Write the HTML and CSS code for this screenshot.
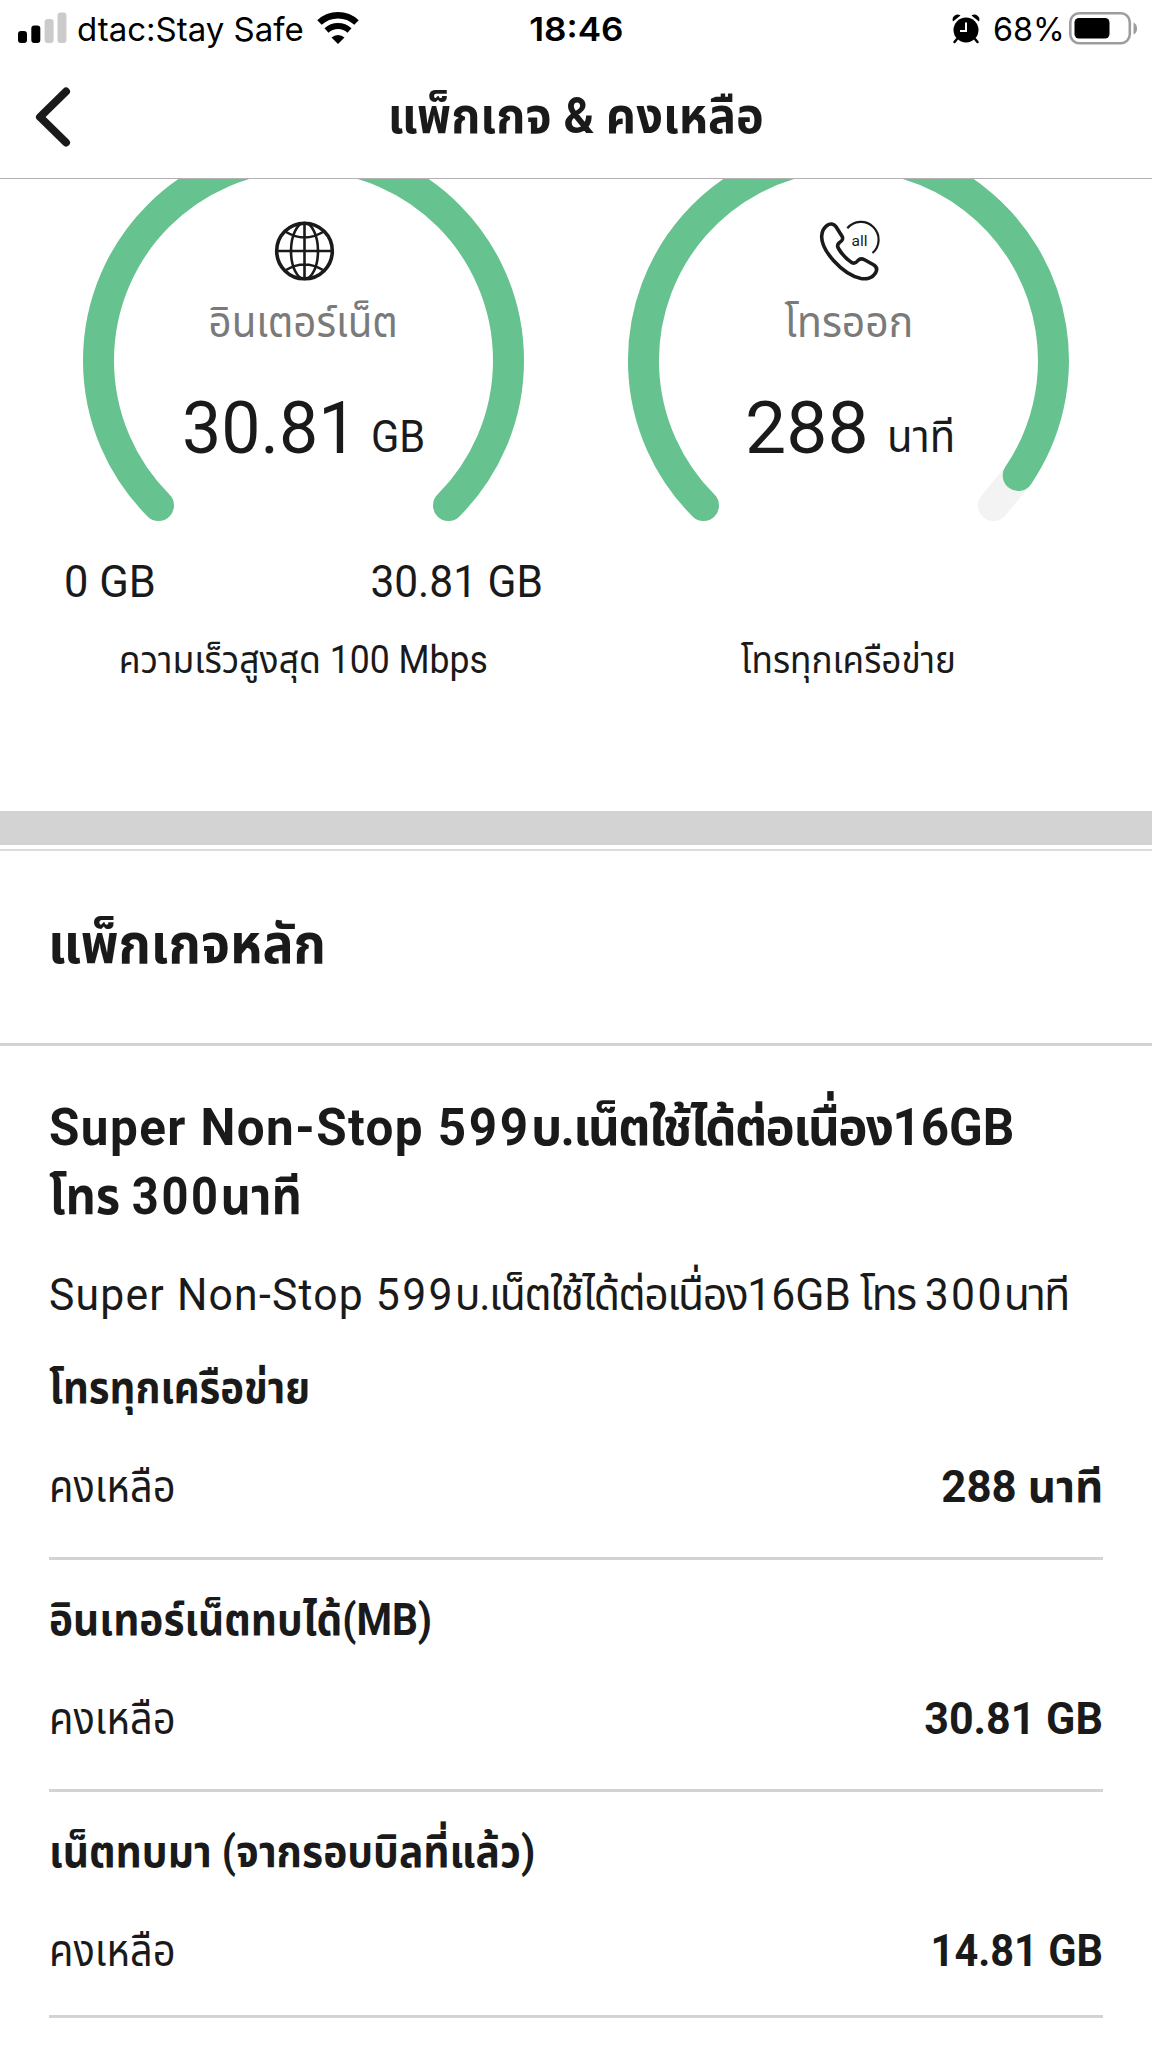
FILE: index.html
```html
<!DOCTYPE html>
<html lang="th">
<head>
<meta charset="utf-8">
<title>แพ็กเกจ &amp; คงเหลือ</title>
<link rel="stylesheet" href="styles.css">
</head>
<body>
<header class="status">
  <div class="status-left">
    <svg class="signal" width="50" height="32" viewBox="0 0 50 32"><rect x="0" y="19" width="9" height="12" rx="3"/><rect x="13.3" y="13.5" width="9" height="17.5" rx="3"/><rect x="26.6" y="7" width="9" height="24" rx="3" fill="#cbcbcb"/><rect x="39.5" y="0.5" width="9" height="30.5" rx="3" fill="#cbcbcb"/></svg>
    <span class="t carrier">dtac:Stay Safe</span>
    <svg class="wifi" width="44" height="34" viewBox="0 0 44 34"><path d="M3.5 11.5A27 27 0 0 1 40.5 11.5" fill="none" stroke="#000" stroke-width="6.5"/><path d="M10.5 19.5A17 17 0 0 1 33.5 19.5" fill="none" stroke="#000" stroke-width="6"/><path d="M22 33L15.5 26.5A9.5 9.5 0 0 1 28.5 26.5Z"/></svg>
  </div>
  <span class="t clock">18:46</span>
  <div class="status-right">
    <svg class="alarm" width="28" height="30" viewBox="0 0 28 30"><circle cx="14" cy="16" r="12.5"/><path d="M1 7.5A5 5 0 0 1 8.5 1.5ZM27 7.5A5 5 0 0 0 19.5 1.5Z"/><path d="M5 25L2.5 28M23 25L25.5 28" stroke="#000" stroke-width="2.5" stroke-linecap="round"/><path d="M14 8.5V17H8" fill="none" stroke="#fff" stroke-width="2"/></svg>
    <span class="t percent">68%</span>
    <svg class="battery" width="69" height="34" viewBox="0 0 69 34"><rect x="1.3" y="1.3" width="59.5" height="30" rx="9" fill="#fff" stroke="#9d9d9d" stroke-width="2.6"/><rect x="5.5" y="6" width="35" height="20.5" rx="4.5"/><path d="M64.5 10.5Q68 12 68 16.5T64.5 22.5Z" fill="#9d9d9d"/></svg>
  </div>
</header>
<nav class="topbar">
  <svg class="back" width="36" height="60" viewBox="0 0 36 60"><path d="M31 4.5L5 30L31 55.5" fill="none" stroke="#1a1a1a" stroke-width="8" stroke-linecap="round" stroke-linejoin="round"/></svg>
  <h1 class="t">แพ็กเกจ &amp; คงเหลือ</h1>
</nav>
<section class="gauges">
  <article class="gauge data">
    <svg class="arc" width="545" height="345" viewBox="0 0 545 345"><path d="M127.5 326.5A205 205 0 1 1 417.5 326.5" fill="none" stroke="#66c28e" stroke-width="31" stroke-linecap="round"/></svg>
    <div class="info">
      <svg class="icon" width="60" height="60" viewBox="0 0 60 60" fill="none" stroke="#1a1a1a" stroke-width="2.6"><circle cx="30.5" cy="30" r="27.8" stroke-width="3.6"/><ellipse cx="30.5" cy="30" rx="13.5" ry="28"/><path d="M30.5 2V58M3 30H58M12 11Q30.500 22 49 11M12 49Q30.500 38 49 49"/></svg>
      <p class="t label">อินเตอร์เน็ต</p>
      <p class="value"><span class="t num">30.81</span><span class="t unit">GB</span></p>
      <p class="range"><span class="t lo">0 GB</span><span class="t hi">30.81 GB</span></p>
      <p class="t note">ความเร็วสูงสุด 100 Mbps</p>
    </div>
  </article>
  <article class="gauge voice">
    <svg class="arc" width="545" height="345" viewBox="0 0 545 345" fill="none" stroke-width="31" stroke-linecap="round"><path d="M417.5 326.5L442 296.5" stroke="#f3f3f3"/><path d="M127.5 326.5A205 205 0 1 1 442.2 296.5" stroke="#66c28e"/></svg>
    <div class="info">
      <svg class="icon" width="60" height="60" viewBox="0 0 60 60" fill="none" stroke="#1a1a1a" stroke-width="3.6" stroke-linejoin="round"><path d="M8 4.5C11 2.2 15 2.5 17.2 6L23 15.2C24.5 18 23.5 19.5 20.5 21.5C18.5 23 18 25 19.5 27.5C23 33.5 28 38.5 33 41.7C35.5 43 37 42 39 39.5C41 37.2 43 37.3 45.5 38.7L54.5 43.8C58 46 58.3 49 56.5 52C53.5 57 47.5 58.5 42 57.5C23 53.5 2 29 2.7 15C3 10.5 4.5 7 8 4.5Z"/><path d="M28.3 7.3A17.700 17.700 0 1 1 53.500 32" stroke-width="2.2"/><text class="all" x="32.5" y="24.5">all</text></svg>
      <p class="t label">โทรออก</p>
      <p class="value"><span class="t num">288</span><span class="t unit">นาที</span></p>
      <p class="range"></p>
      <p class="t note">โทรทุกเครือข่าย</p>
    </div>
  </article>
</section>
<div class="divider"></div>
<h2 class="section-title"><span class="t">แพ็กเกจหลัก</span></h2>
<main class="package">
  <h3><span class="t name"><span class="lat">Super Non-Stop </span><span class="dig">599</span><span class="th">บ.เน็ตใช้ได้ต่อเนื่อง</span>16GB</span><span class="t name-end">โทร <span class="dig">300</span>นาที</span></h3>
  <p class="summary"><span class="t"><span class="lat">Super Non-Stop </span><span class="dig">599</span><span class="th">บ.เน็ตใช้ได้ต่อเนื่อง</span>16GB<span class="th"> โทร </span><span class="dig">300</span><span class="th">นาที</span></span></p>
  <section class="item calls"><h4 class="t">โทรทุกเครือข่าย</h4><div class="row"><span class="t left">คงเหลือ</span><b class="t amount">288 นาที</b></div></section>
  <section class="item rollover"><h4 class="t">อินเทอร์เน็ตทบได้(MB)</h4><div class="row"><span class="t left">คงเหลือ</span><b class="t amount">30.81 GB</b></div></section>
  <section class="item carried"><h4 class="t">เน็ตทบมา (จากรอบบิลที่แล้ว)</h4><div class="row"><span class="t left">คงเหลือ</span><b class="t amount">14.81 GB</b></div></section>
</main>
</body>
</html>
```
FILE: styles.css
```css
* { box-sizing: border-box; margin: 0; padding: 0; }
body { width: 1152px; height: 2048px; overflow: hidden; background: #fff; color: #1a1a1a; font-family: Roboto, "Noto Sans Thai", "Noto Sans", sans-serif; }
svg { display: block; flex: none; overflow: visible; }

/* Condensed text: --sx is the horizontal scale of each line */
.t { display: block; white-space: nowrap; transform: scaleX(var(--sx, 1)); transform-origin: left; }
.lat { letter-spacing: 0.029em; }
.dig { letter-spacing: 0.055em; }
.th { letter-spacing: -0.034em; }

.status { height: 58px; display: grid; grid-template-columns: 1fr auto 1fr; padding: 0 14px; color: #000; font: 400 33px/58px Inter, sans-serif; }
.status-left, .status-right { display: flex; align-items: flex-start; }
.status-left { padding-left: 4px; }
.status-right { justify-content: flex-end; }
.signal { margin-top: 12px; }
.carrier { width: 225px; margin-left: 9px; }
.wifi { margin: 11px 0 0 14px; }
.clock { --sx: 1.063; font-weight: 600; transform-origin: center; }
.alarm { margin-top: 14px; }
.percent { --sx: 0.98; width: 68px; margin: 0 8px 0 13px; }
.battery { margin-top: 12px; }

.topbar { height: 121px; display: grid; grid-template-columns: 36px 1fr 36px; padding: 0 35px; border-bottom: 1px solid #b2b2b2; }
.back { margin-top: 29px; }
.topbar h1 { --sx: 0.937; font-size: 50px; line-height: 116px; font-weight: 700; justify-self: center; transform-origin: center; }

.gauges { height: 632px; display: grid; grid-template-columns: 545px 545px; padding: 0 31px; }
.gauge { display: grid; overflow: hidden; }
.arc, .info { grid-area: 1 / 1; }
.info { display: flex; flex-direction: column; align-items: center; padding-top: 42px; }
.all { font: 400 15.5px Roboto, sans-serif; fill: #1a1a1a; stroke: none; }
.label { --sx: 0.935; transform-origin: center; margin-top: 11px; font-size: 43px; line-height: 60px; color: #7a7a7a; }
.value { display: flex; gap: 24px; margin-top: 37px; line-height: 80px; }
.num { --sx: 0.97; width: 165px; font-size: 72px; }
.unit { --sx: 0.924; width: 55px; padding-top: 8px; font-size: 45px; }
.range { align-self: stretch; height: 50px; margin-top: 80px; padding: 0 33px; display: flex; justify-content: space-between; font-size: 45px; line-height: 50px; }
.lo { --sx: 0.965; }
.hi { --sx: 0.943; transform-origin: right; }
.note { --sx: 0.936; transform-origin: center; margin-top: 28px; font-size: 38px; line-height: 50px; }
.voice .label { --sx: 0.949; }
.voice .value { gap: 22px; }
.voice .num { --sx: 1.018; width: 120px; }
.voice .unit { --sx: 0.93; width: 66px; }
.voice .note { --sx: 0.925; }

.divider { height: 40px; border-top: 34px solid #d3d3d3; border-bottom: 2px solid #dcdcdc; }
.section-title { height: 195px; padding-left: 48px; border-bottom: 3px solid #d3d3d3; font-size: 55px; line-height: 187px; }
.section-title .t { --sx: 0.945; }

.package { padding: 47px 49px 0; }
.package h3 { font-size: 52px; line-height: 69px; }
.name { --sx: 0.95; }
.name-end { --sx: 0.905; }
.summary { margin: 34px 0 3px; font-size: 45px; line-height: 60px; }
.summary .t { --sx: 0.948; }
.item { padding: 30px 0 40px; border-bottom: 3px solid #d3d3d3; }
.item:last-child { padding-bottom: 34px; }
.item h4 { font-size: 44px; line-height: 60px; }
.row { margin-top: 39px; display: flex; justify-content: space-between; font-size: 45px; line-height: 60px; }
.left { --sx: 0.885; }
.amount { transform-origin: right; }
.calls h4 { --sx: 0.911; }
.calls .amount { --sx: 0.974; }
.rollover h4 { --sx: 0.923; }
.rollover .amount { --sx: 0.956; }
.carried h4 { --sx: 0.926; }
.carried .amount { --sx: 0.922; }
```
